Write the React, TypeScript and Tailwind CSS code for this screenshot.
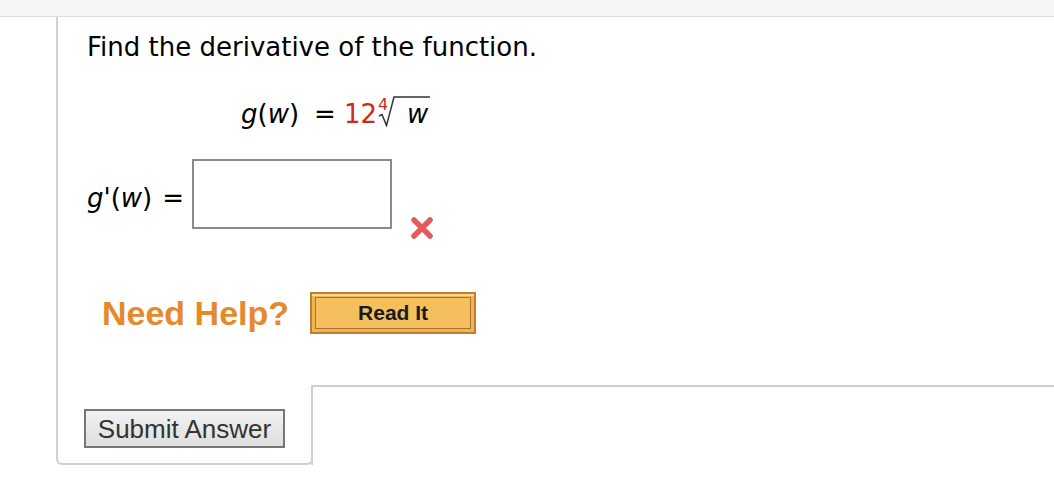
import React from "react";

const verdana = { fontFamily: '"DejaVu Sans", Verdana, sans-serif' };
const arial = { fontFamily: '"Liberation Sans", Arial, Helvetica, sans-serif' };

function FourthRoot({ children }: { children: React.ReactNode }) {
  // radical drawn over the radicand, index 4 tucked into the crook
  return (
    <span className="relative inline-block pl-[30px] pr-[2px]">
      <svg width="53" height="31" viewBox="0 0 53 31" className="absolute left-0 top-[-3px]">
        <path d="M2 20 L5 18.5 L9.5 29.5 L17 1 L53 1" fill="none" stroke="#333" strokeWidth="1.5" />
      </svg>
      <span className="absolute left-[1px] top-[-2px] text-[16px] leading-none text-[#d0281c]">4</span>
      {children}
    </span>
  );
}

function WrongMark() {
  return (
    <svg width="26" height="26" viewBox="0 0 26 26" className="blur-[0.5px]">
      <path d="M5 5 L21 21 M21 5 L5 21" stroke="#e35b5b" strokeWidth="5.5" strokeLinecap="round" />
    </svg>
  );
}

export default function App() {
  return (
    <div className="w-[1054px] h-[482px] bg-white overflow-hidden">
      {/* top strip */}
      <div className="h-[17px] bg-[#f6f6f6] border-b border-[#dedede]" />

      <div className="ml-[56px]">
        {/* question body */}
        <div className="border-l-2 border-[#d0d0d0] pl-[29px] pt-[15px] h-[368px]">
          <p className="text-[26px] leading-[30px] text-black" style={verdana}>
            Find the derivative of the function.
          </p>

          <div className="mt-[37px] ml-[154px] text-[26px] leading-[30px] text-black whitespace-nowrap" style={verdana}>
            <span className="italic">g</span>(<span className="italic">w</span>)
            <span className="inline-block ml-[15px] mr-[8px]">=</span>
            <span className="text-[#d0281c]">12</span>
            <FourthRoot>
              <span className="italic">w</span>
            </FourthRoot>
          </div>

          <div className="mt-[30px] flex items-start">
            <div className="h-[70px] pt-[24px] text-[26px] leading-[30px] whitespace-nowrap" style={verdana}>
              <span className="italic">g</span>'(<span className="italic">w</span>)
              <span className="inline-block ml-[10px] mr-[8px]">=</span>
            </div>
            <div className="w-[200px] h-[70px] border-2 border-[#8a8a8a] bg-white" />
            <div className="ml-[17px] mt-[56px] h-[14px]">
              <WrongMark />
            </div>
          </div>

          <div className="mt-[63px] ml-[15px] flex items-center">
            <span className="text-[#e5892d] font-bold text-[34px] leading-[40px]" style={arial}>
              Need Help?
            </span>
            <button
              className="ml-[21px] w-[166px] h-[42px] border-2 border-[#c07d2c] bg-[#f0b452] p-[3px] shadow-[inset_0_2px_0_#f8d9a0]"
              style={arial}
            >
              <span className="flex items-center justify-center w-full h-full border border-[#a8742f] bg-[#f4bf5c] font-bold text-[21px] text-[#1a1a1a]">
                Read It
              </span>
            </button>
          </div>
        </div>

        {/* bottom tab with submit button */}
        <div className="flex">
          <div className="w-[257px] h-[80px] border-l-2 border-r-2 border-b-2 border-[#d0d0d0] rounded-b-[6px] pl-[26px] pt-[24px]">
            <button
              className="w-[201px] h-[39px] border-2 border-[#777] bg-gradient-to-b from-[#f2f2f2] to-[#dedede] text-[26px] text-[#333] leading-none"
              style={arial}
            >
              Submit Answer
            </button>
          </div>
          <div className="flex-1 -ml-[2px] border-t-2 border-l-2 border-[#d0d0d0] rounded-tl-[3px]" />
        </div>
      </div>
    </div>
  );
}
